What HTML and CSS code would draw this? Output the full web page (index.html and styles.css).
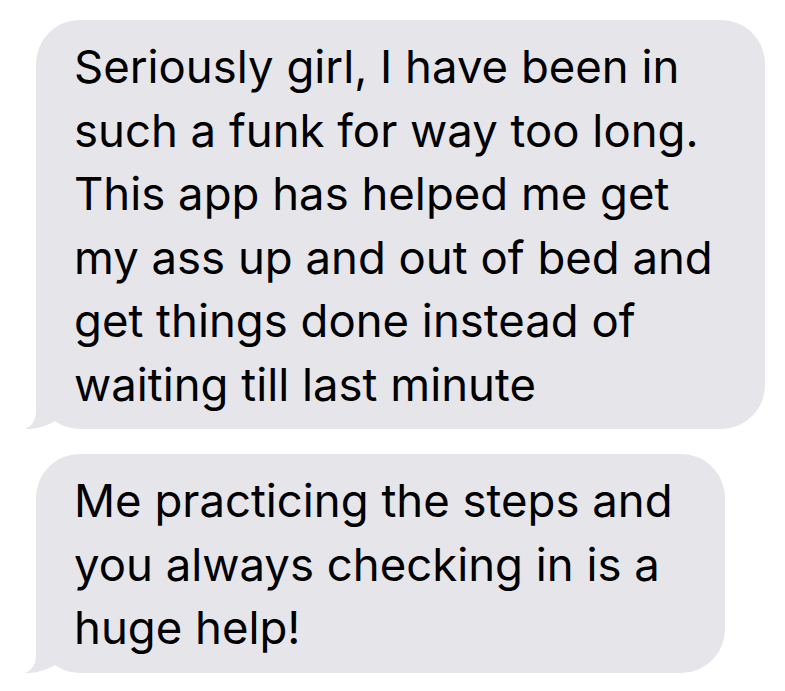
FILE: index.html
```html
<!DOCTYPE html>
<html>
<head>
  <meta charset="UTF-8" />
  <title>Messages</title>
  <link rel="stylesheet" href="styles.css">
</head>
<body>
  <div class="thread">
    <div class="bubble">
      Seriously girl, I have been in<br>
      such a funk for way too long.<br>
      This app has helped me get<br>
      my ass up and out of bed and<br>
      get things done instead of<br>
      waiting till last minute
      <svg class="tail" width="36" height="50" viewBox="0 0 36 50">
        <path d="M12 0 L12 32 C12 42 7 48 1 50 C11 50.5 23 47 33 41 L33 0 Z" />
      </svg>
    </div>
    <div class="bubble">
      Me practicing the steps and<br>
      you always checking in is a<br>
      huge help!
      <svg class="tail" width="36" height="50" viewBox="0 0 36 50">
        <path d="M12 0 L12 32 C12 42 7 48 1 50 C11 50.5 23 47 33 41 L33 0 Z" />
      </svg>
    </div>
  </div>
</body>
</html>
```
FILE: styles.css
```css
body {
  margin: 0;
  background-color: #fff;
  font-family: Inter, "Liberation Sans", Arial, sans-serif;
  color: #000;
}
.thread {
  display: flex;
  flex-direction: column;
  align-items: flex-start;
  gap: 25px;
  padding: 20px 0 0 36px;
}
.bubble {
  position: relative;
  background-color: #e5e5ea;
  border-radius: 44px;
  padding: 15px 52px 13px 38px;
  font-size: 45.5px;
  line-height: 63.5px;
  white-space: nowrap;
}
.tail {
  position: absolute;
  left: -12px;
  bottom: 0;
  fill: #e5e5ea;
}
```
